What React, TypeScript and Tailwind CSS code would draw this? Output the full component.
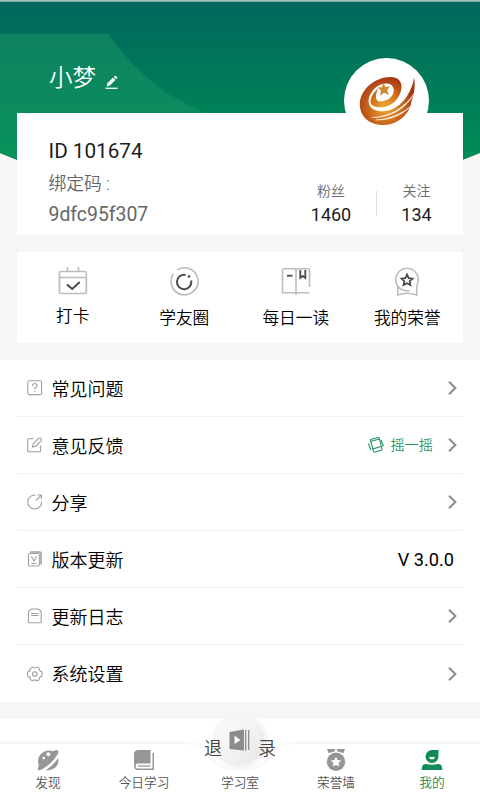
import type { ReactNode } from "react";

const stats = [
  { label: "粉丝", value: "1460" },
  { label: "关注", value: "134" },
];

const shortcuts = [
  { label: "打卡", icon: <CheckInIcon />, tight: true },
  { label: "学友圈", icon: <CircleIcon /> },
  { label: "每日一读", icon: <ReadIcon /> },
  { label: "我的荣誉", icon: <HonorIcon /> },
];

export default function App() {
  return (
    <main className="relative h-[800px] w-[480px] overflow-hidden bg-[#f6f6f6] font-[Roboto,'Noto_Sans_CJK_SC',sans-serif] text-[#1c1c1c]">
      <HeaderBackdrop />

      <div className="relative flex flex-col">
        <header className="relative z-10 flex h-[113px] items-start justify-between pr-[51px] pl-[49px]">
          <div className="flex items-center pt-[61px] text-white">
            <h1 className="text-[23.5px] leading-[34px] font-[350]">小梦</h1>
            <PencilIcon />
          </div>
          <div className="mt-[58px] h-[85px] w-[85px] shrink-0 rounded-full bg-white">
            <LogoMark />
          </div>
        </header>

        <section className="mx-[17px] flex h-[122px] justify-between bg-white pl-[31.5px]">
          <div className="pt-6">
            <div className="text-[20.7px] leading-[28px]">ID 101674</div>
            <div className="mt-[5px] text-[17.8px] leading-[28px] font-[350] text-[#666]">
              绑定码 :
            </div>
            <div className="mt-[3px] text-[19.4px] leading-[28px] text-[#666]">9dfc95f307</div>
          </div>
          <div className="mt-[68px] flex h-[46px] items-start pr-[7px]">
            {stats.map((stat, i) => (
              <div key={stat.label} className="flex items-center">
                {i > 0 && <span className="mt-[-2px] h-[25px] w-px bg-[#dcdcdc]" />}
                <div className={i > 0 ? "w-[79px] text-center" : "w-[90px] text-center"}>
                  <div className="text-[14px] leading-[20px] font-[350] text-[#6c6c6c]">
                    {stat.label}
                  </div>
                  <div className="mt-[2px] text-[18px] leading-[24px]">{stat.value}</div>
                </div>
              </div>
            ))}
          </div>
        </section>

        <section className="mx-[17px] mt-[17px] grid h-[91px] grid-cols-4 bg-white">
          {shortcuts.map((item) => (
            <div
              key={item.label}
              className="flex flex-col items-center pt-[15px] text-[16.7px] leading-[24px] font-[350] text-black"
            >
              {item.icon}
              <span className={item.tight ? "mt-[8px]" : "mt-[10px]"}>{item.label}</span>
            </div>
          ))}
        </section>

        <section className="mt-[17px] h-[342px] bg-white px-[17px]">
          <Row icon={<QuestionIcon />} label="常见问题">
            <Chevron />
          </Row>
          <Row icon={<FeedbackIcon />} label="意见反馈">
            <span className="mr-[15px] flex items-center gap-[6px] text-[14.2px] font-[350] text-[#1f9562]">
              <ShakeIcon />
              <span className="pt-[2px]">摇一摇</span>
            </span>
            <Chevron />
          </Row>
          <Row icon={<ShareIcon />} label="分享">
            <Chevron />
          </Row>
          <Row icon={<VersionIcon />} label="版本更新">
            <span className="mr-[3px] pt-[2px] text-[18.2px] text-black">V 3.0.0</span>
          </Row>
          <Row icon={<LogIcon />} label="更新日志">
            <Chevron />
          </Row>
          <Row icon={<GearIcon />} label="系统设置" last>
            <Chevron />
          </Row>
        </section>

        <button className="mt-[17px] flex h-[81px] w-full justify-center bg-white pt-[16px] text-[18px] leading-[28px] font-[350] text-[#444]">
          <span className="relative z-10">退</span>
          <span>出登</span>
          <span className="relative z-10">录</span>
        </button>
      </div>

      <TabBar />
    </main>
  );
}

function Row({
  icon,
  label,
  last,
  children,
}: {
  icon: ReactNode;
  label: string;
  last?: boolean;
  children: ReactNode;
}) {
  return (
    <div
      className={
        last
          ? "flex h-[57px] items-center pr-[6px] pl-[9px]"
          : "flex h-[57px] items-center border-b border-[#f0f0f0] pr-[6px] pl-[9px]"
      }
    >
      {icon}
      <span className="ml-[7.5px] flex-1 pt-[3px] text-[18px] leading-[28px] font-[350] text-black">
        {label}
      </span>
      {children}
    </div>
  );
}

function TabBar() {
  return (
    <nav className="absolute bottom-0 left-0 h-[88px] w-full">
      <svg width="480" height="88" className="absolute inset-0" aria-hidden="true">
        <defs>
          <linearGradient id="knob" x1="0" y1="0" x2="1" y2="1">
            <stop offset="0" stopColor="#fbfbfb" />
            <stop offset="0.5" stopColor="#f3f3f3" />
            <stop offset="1" stopColor="#e6e6e6" />
          </linearGradient>
          <filter id="soft" x="-20%" y="-40%" width="140%" height="180%">
            <feDropShadow dx="0" dy="-1" stdDeviation="2" floodColor="#000" floodOpacity="0.06" />
          </filter>
          <filter id="knobShadow" x="-30%" y="-30%" width="160%" height="160%">
            <feDropShadow dx="0" dy="1" stdDeviation="2" floodColor="#000" floodOpacity="0.12" />
          </filter>
        </defs>
        <path
          d="M-10 32H184C197 32 202 37 207 44.500C215 54 226 59 240 59S265 54 273 44.500C278 37 283 32 296 32H490V98H-10Z"
          fill="#fff"
          filter="url(#soft)"
        />
        <circle cx="240" cy="28.500" r="27" fill="none" stroke="#fafafa" strokeWidth="3" opacity="0.5" />
        <circle cx="240" cy="28" r="24.500" fill="url(#knob)" filter="url(#knobShadow)" />
        <path d="M229.500 20L244 17.500V38.500L229.500 37Z" fill="#8c8c8c" />
        <path d="M234.500 23.700V32L240.500 28Z" fill="#fff" />
        <path d="M245.700 17.800V38.500M248.700 18V38" stroke="#8c8c8c" strokeWidth="1.300" />
      </svg>
      <div className="relative grid h-full grid-cols-5 pt-[36px] text-[12.7px] leading-[18px] font-[350] text-[#555]">
        <Tab label="发现">
          <PlanetIcon />
        </Tab>
        <Tab label="今日学习">
          <BookIcon />
        </Tab>
        <Tab label="学习室">
          <span className="h-6" />
        </Tab>
        <Tab label="荣誉墙">
          <MedalIcon />
        </Tab>
        <Tab label="我的" active>
          <ProfileIcon />
        </Tab>
      </div>
    </nav>
  );
}

function Tab({ label, active, children }: { label: string; active?: boolean; children: ReactNode }) {
  return (
    <div
      className={active ? "flex flex-col items-center text-[#138b58]" : "flex flex-col items-center"}
    >
      {children}
      <span className="mt-[2px]">{label}</span>
    </div>
  );
}

function HeaderBackdrop() {
  return (
    <svg width="480" height="161" className="absolute top-0 left-0" aria-hidden="true">
      <defs>
        <linearGradient id="head" x1="0" y1="0" x2="0" y2="1">
          <stop offset="0" stopColor="#00675d" />
          <stop offset="1" stopColor="#008c56" />
        </linearGradient>
        <linearGradient id="leaf" x1="0" y1="0" x2="0" y2="1">
          <stop offset="0" stopColor="#0f8262" />
          <stop offset="1" stopColor="#08925a" />
        </linearGradient>
      </defs>
      <path d="M0 0H480V153L460 161H20L0 153Z" fill="url(#head)" />
      <path d="M0 34H108C133 68 163 97 209 114V161H20L0 153Z" fill="url(#leaf)" />
      <path d="M0 0H480V1.700H0Z" fill="#a5c4bd" />
    </svg>
  );
}

function LogoMark() {
  return (
    <svg width="85" height="85" viewBox="343.500 58 85 85" aria-hidden="true">
      <defs>
        <radialGradient id="gold" gradientUnits="userSpaceOnUse" cx="385" cy="107" r="30">
          <stop offset="0" stopColor="#efae35" />
          <stop offset="0.5" stopColor="#cf701c" />
          <stop offset="1" stopColor="#a83412" />
        </radialGradient>
      </defs>
      <path
        d="M413.700 77.500C415 87 413.500 95 411 101C410 113 398 125 383 125C367 125 359.300 115 359.300 104C360 88 376 77 390 77C397 77 401.300 81 401 87C400.500 98 391 107.300 381 107.300C373.500 107.500 369.500 105 370 100.500C371 95 374 91 378 88.500C375 93 374.500 99 377.500 101C380 102 386 101 389.500 98C393.500 94 394 91 392.700 87.500C391 82.500 383 82 376.500 86.500C370.500 91 367 98 368.500 104C371 111.500 382 113 391 109.500C403 105 411.500 91 413.700 77.500Z"
        fill="url(#gold)"
      />
      <path
        d="M414 93C406 108 391 118 371 117.500C391 116.500 404 107.500 414 93ZM411.500 105C402 115 390 120.500 375 120C390 119 402 113.500 411.500 105Z"
        fill="#fff"
        stroke="#fff"
        strokeWidth="0.400"
      />
      <path
        d="M383 82.500L384.900 87L389.500 86.500L386.500 90.300L388.500 95L383.800 92.700L379.500 95.500L380.500 90.600L377 87.500L381.500 87.300Z"
        fill="#cf8a30"
      />
    </svg>
  );
}

function PencilIcon() {
  return (
    <svg width="13" height="15" viewBox="0 0 13 15" className="mt-[9px] ml-[9px]" aria-hidden="true">
      <path d="M1.700 11.500L2.400 8.200L8 2.600L10.400 5L4.800 10.600Z" fill="#fff" />
      <path d="M8.800 1.900L9.800 1Q10.800.4 11.600 1.300T12 3.300L11.100 4.300Z" fill="#fff" />
      <path d="M.5 13.300H12.500" stroke="#fff" strokeWidth="1.300" />
    </svg>
  );
}

function Chevron() {
  return (
    <svg width="9" height="16" viewBox="0 0 9 16" fill="none" aria-hidden="true">
      <path d="M1 1.700L7.400 8L1 14.300" stroke="#8c8c8c" strokeWidth="2" />
    </svg>
  );
}

function CheckInIcon() {
  return (
    <svg width="30" height="30" viewBox="0 0 30 30" fill="none" aria-hidden="true">
      <rect x="1.500" y="4.500" width="26.800" height="22" rx="1.500" stroke="#bdbdbd" strokeWidth="1.700" />
      <path d="M2 10.500H28M9.500 0V4.500M20.500 0V4.500" stroke="#bdbdbd" strokeWidth="1.700" />
      <path d="M9 17.500L14.200 22L21.700 15" stroke="#4a4a4a" strokeWidth="2" />
    </svg>
  );
}

function CircleIcon() {
  return (
    <svg width="30" height="30" viewBox="0 0 30 30" fill="none" aria-hidden="true">
      <path d="M8.500 2.800A13.500 13.500 0 1 1 4.200 7" stroke="#bdbdbd" strokeWidth="1.700" />
      <path d="M16.500 7.900A7.200 7.200 0 1 0 22.200 13.500" stroke="#4a4a4a" strokeWidth="2" />
      <circle cx="20" cy="9.500" r="1.300" fill="#4a4a4a" />
    </svg>
  );
}

function ReadIcon() {
  return (
    <svg width="30" height="30" viewBox="0 0 30 30" fill="none" aria-hidden="true">
      <path
        d="M28.500 20V3Q28.500 1.700 27 1.700H17Q15 1.700 15 3.500Q15 1.700 13 1.700H2.500Q1.500 1.700 1.500 3V25.700H28.500M15 3.500V28"
        stroke="#bdbdbd"
        strokeWidth="1.600"
      />
      <path d="M6 8.700H11.500" stroke="#4a4a4a" strokeWidth="1.800" />
      <path d="M19.300 3V11L21.800 9L24.300 11V3" stroke="#4a4a4a" strokeWidth="1.800" />
    </svg>
  );
}

function HonorIcon() {
  return (
    <svg width="30" height="30" viewBox="0 0 30 30" fill="none" aria-hidden="true">
      <path
        d="M5.800 19.300A11.400 11.400 0 1 1 24.500 19M5.800 19.300Q9.500 24.300 17.500 23.800M5.800 19V28Q15 24.500 24.800 28V18.500"
        stroke="#bdbdbd"
        strokeWidth="1.600"
      />
      <path
        d="M15 7.500L16.700 11.100L20.500 11.600L17.700 14.200L18.400 18L15 16.200L11.600 18L12.300 14.200L9.500 11.600L13.300 11.100Z"
        stroke="#4a4a4a"
        strokeWidth="1.800"
      />
    </svg>
  );
}

function QuestionIcon() {
  return (
    <svg width="18" height="18" viewBox="0 0 18 18" fill="none" stroke="#a0a0a0" aria-hidden="true">
      <rect x="1.800" y="1.800" width="13.800" height="13.800" rx="1.500" strokeWidth="1.100" />
      <path d="M6.400 6.900Q6.500 4.500 8.700 4.500T11 6.700Q11 7.800 9.800 8.500T8.700 10.500" strokeWidth="1.100" />
      <path d="M8.700 12V13.300" strokeWidth="1.200" />
    </svg>
  );
}

function FeedbackIcon() {
  return (
    <svg width="18" height="18" viewBox="0 0 18 18" fill="none" stroke="#a0a0a0" strokeWidth="1.100" aria-hidden="true">
      <path d="M7.500 2.800H2.700Q1.700 2.800 1.700 3.800V14.700Q1.700 15.700 2.700 15.700H13.500Q14.500 15.700 14.500 14.700V9.500" />
      <path d="M6.500 10.900L7.300 7.700L12.700 2.300Q14 1.500 15 2.500T15.100 4.800L9.700 10.200Z" />
    </svg>
  );
}

function ShareIcon() {
  return (
    <svg width="18" height="18" viewBox="0 0 18 18" fill="none" stroke="#a0a0a0" strokeWidth="1.100" aria-hidden="true">
      <path d="M9.500 2A7 7 0 1 0 15.700 8.500M10 7.500L15.200 2.300M11.500 2H15.500V6" />
    </svg>
  );
}

function VersionIcon() {
  return (
    <svg width="18" height="18" viewBox="0 0 18 18" fill="none" stroke="#a0a0a0" strokeWidth="1.100" aria-hidden="true">
      <rect x="2.500" y="3.500" width="10.800" height="12.500" rx="1" />
      <path d="M4 2H13.500Q15 2 15 3.500V14.500" strokeWidth="1.600" />
      <path d="M5.500 6.500L8 11.200L10.500 6.500M5.300 13.500H10.700" />
    </svg>
  );
}

function LogIcon() {
  return (
    <svg width="18" height="18" viewBox="0 0 18 18" fill="none" stroke="#a0a0a0" strokeWidth="1.100" aria-hidden="true">
      <path d="M5 2H12.500L15.200 4.500V14.700Q15.200 15.700 14.200 15.700H3.500Q2.500 15.700 2.500 14.700V4.500Z" />
      <path d="M5.200 6.500H12.500M5.200 8.500H12.500" />
    </svg>
  );
}

function GearIcon() {
  return (
    <svg width="18" height="18" viewBox="0 0 18 18" fill="none" stroke="#a0a0a0" strokeWidth="1.100" aria-hidden="true">
      <path d="M4.500 3.500Q6 1.600 7 2.200Q8.800 3.800 10.600 2.200Q11.700 1.600 13.200 3.500Q13 6 15.600 6.600Q17 9 15.600 11.400Q13 12 13.200 14.300Q11.700 16.200 10.600 15.700Q8.800 14 7 15.700Q6 16.200 4.500 14.300Q4.700 12 2 11.400Q.7 9 2 6.600Q4.700 6 4.500 3.500Z" />
      <circle cx="8.800" cy="9" r="2.300" />
    </svg>
  );
}

function ShakeIcon() {
  return (
    <svg width="16" height="18" viewBox="0 0 16 18" fill="none" stroke="currentColor" strokeWidth="1.100" aria-hidden="true">
      <path d="M2.700 3.500L10 1.500Q11 1.300 11.300 2.200L14 13Q14.100 14 13.200 14.300L6.700 16.200Q5.800 16.300 5.500 15.400L2.500 4.500ZM4 13.300L13 10.500M3.300 5.300L11.300 3" />
      <path d="M.5 7.500L2.800 14M13 4L15.500 10.500" />
    </svg>
  );
}

function PlanetIcon() {
  return (
    <svg width="24" height="24" viewBox="0 0 24 24" aria-hidden="true">
      <path
        d="M17 3.300Q19.500 2 21.800 2.300Q23 3.500 21.500 6.500Q16 15.500 6.500 21Q3 23 2 22Q1.300 20 3 17.500Q.5 12 4 7Q9.500.5 17 3.300Z"
        fill="#969696"
      />
      <path d="M22 10Q23.500 16 19.300 19.500Q15.500 22.700 10 22Q17.500 17.500 22 10Z" fill="#969696" />
      <circle cx="12.300" cy="6.300" r="2" fill="#fff" />
      <circle cx="7.700" cy="10" r="1.300" fill="#fff" />
    </svg>
  );
}

function BookIcon() {
  return (
    <svg width="24" height="24" viewBox="0 0 24 24" fill="none" aria-hidden="true">
      <path
        d="M5.500 2H18.500V15.500H5Q3.500 16 3.500 18Q3.500 19.700 5.200 20.500H20.500V5H22V22H5Q2 21.500 2 18V6Q2 2.500 5.500 2Z"
        fill="#969696"
      />
      <path d="M6 18H18.500" stroke="#969696" strokeWidth="1.300" />
    </svg>
  );
}

function MedalIcon() {
  return (
    <svg width="24" height="24" viewBox="0 0 24 24" aria-hidden="true">
      <path d="M3 1H10.500L11.500 3L4.500 5.300ZM13.500 1H21L19.500 5.300L12.500 3Z" fill="#969696" />
      <circle cx="12" cy="13.800" r="9.200" fill="#969696" />
      <path
        d="M12 8.700L13.600 12L17.200 12.500L14.600 15L15.200 18.600L12 16.900L8.800 18.600L9.400 15L6.800 12.500L10.400 12Z"
        fill="#fff"
      />
    </svg>
  );
}

function ProfileIcon() {
  return (
    <svg width="24" height="24" viewBox="0 0 24 24" aria-hidden="true">
      <path d="M12 2H18.500V8.500A6.500 6.500 0 1 1 12 2Z" fill="#138b58" />
      <path d="M9 9H15Q14.500 11.500 12 11.500T9 9Z" fill="#fff" />
      <path d="M5 16Q12 17.500 19 16Q22.300 16.500 22.300 22H1.700Q1.700 16.500 5 16Z" fill="#138b58" />
    </svg>
  );
}
